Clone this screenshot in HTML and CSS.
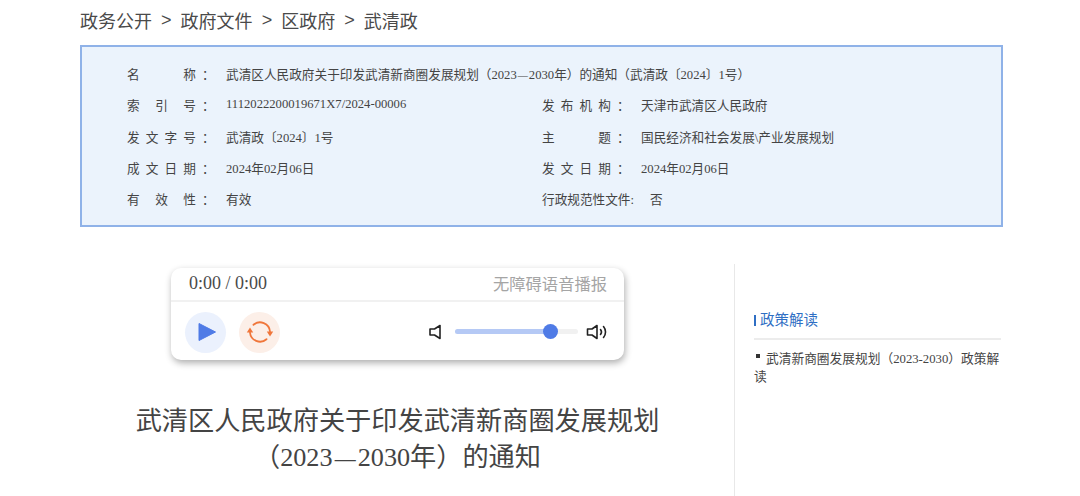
FILE: index.html
```html
<!DOCTYPE html>
<html lang="zh-CN">
<head>
<meta charset="utf-8">
<title>武清区人民政府关于印发武清新商圈发展规划</title>
<link rel="stylesheet" href="styles.css">
</head>
<body>
<div class="page">
  <nav class="crumbs"><span>政务公开</span><i>&gt;</i><span>政府文件</span><i>&gt;</i><span>区政府</span><i>&gt;</i><span>武清政</span></nav>
  <section class="info">
    <div class="row"><div class="cell wide"><span class="label">名称</span><span class="colon">：</span><span class="value">武清区人民政府关于印发武清新商圈发展规划（2023<span class="dash">—</span>2030年）的通知（武清政〔2024〕1号）</span></div></div>
    <div class="row">
      <div class="cell"><span class="label">索引号</span><span class="colon">：</span><span class="value">1112022200019671X7/2024-00006</span></div>
      <div class="cell"><span class="label">发布机构</span><span class="colon">：</span><span class="value">天津市武清区人民政府</span></div>
    </div>
    <div class="row">
      <div class="cell"><span class="label">发文字号</span><span class="colon">：</span><span class="value">武清政〔2024〕1号</span></div>
      <div class="cell"><span class="label">主题</span><span class="colon">：</span><span class="value">国民经济和社会发展\产业发展规划</span></div>
    </div>
    <div class="row">
      <div class="cell"><span class="label">成文日期</span><span class="colon">：</span><span class="value">2024年02月06日</span></div>
      <div class="cell"><span class="label">发文日期</span><span class="colon">：</span><span class="value">2024年02月06日</span></div>
    </div>
    <div class="row">
      <div class="cell"><span class="label">有效性</span><span class="colon">：</span><span class="value">有效</span></div>
      <div class="cell"><span class="label free">行政规范性文件:</span><span class="value">否</span></div>
    </div>
  </section>
  <div class="content">
    <main class="article">
      <div class="player">
        <div class="player-top"><span class="time">0:00 / 0:00</span><span class="hint">无障碍语音播报</span></div>
        <div class="player-bottom">
          <span class="round play"><svg width="18" height="20" viewBox="0 0 18 20"><path d="M1 1.500v17L17.500 10z" fill="#4f7be6" stroke="#4f7be6" stroke-linejoin="round"/></svg></span>
          <span class="round loop"><svg width="28" height="26" viewBox="0 0 28 26" fill="none" stroke="#f0763a" stroke-width="1.800" stroke-linecap="round"><path d="M7.500 5.800A10 10 0 0 1 24 12.500"/><path d="M20.500 20.200A10 10 0 0 1 4 13.500"/><path d="M20.800 12.500h6.400L24 17.500z" fill="#f0763a" stroke="none"/><path d="M0.800 13.500h6.400L4 8.500z" fill="#f0763a" stroke="none"/></svg></span>
          <div class="volume">
            <svg width="14" height="16" viewBox="0 0 14 16" fill="none" stroke="#222" stroke-width="1.600" stroke-linejoin="round"><path d="M12 1.500v13L6.500 11H2V5h4.500z"/></svg>
            <div class="track"><div class="fill"></div><div class="knob"></div></div>
            <svg width="22" height="16" viewBox="0 0 22 16" fill="none" stroke="#222" stroke-width="1.600" stroke-linejoin="round" stroke-linecap="round"><path d="M11 1.500v13L6 11H1.500V5H6z"/><path d="M14.500 5.500a4 4 0 0 1 0 5"/><path d="M17.500 2.500a8.500 8.500 0 0 1 0 11"/></svg>
          </div>
        </div>
      </div>
      <h1 class="title">武清区人民政府关于印发武清新商圈发展规划<br>（2023<span class="dash">—</span>2030年）的通知</h1>
    </main>
    <aside class="side">
      <h2 class="side-title">政策解读</h2>
      <p class="side-link"><span class="bullet"></span>武清新商圈发展规划（2023-2030）政策解读</p>
    </aside>
  </div>
</div>
</body>
</html>
```
FILE: styles.css
```css
* { box-sizing: border-box; }
html, body { margin: 0; padding: 0; background: #fff; }
body {
  width: 1080px;
  height: 496px;
  overflow: hidden;
  font-family: "Liberation Serif", "Noto Sans CJK SC", serif;
  color: #444;
}
.page { margin-left: 80px; width: 923px; }
.crumbs {
  height: 45px;
  display: flex;
  align-items: center;
  padding-bottom: 5px;
  font-size: 18px;
  color: #4a4a4a;
}
.crumbs i {
  font-family: "Liberation Sans", sans-serif;
  font-style: normal;
  font-size: 18px;
  width: 28.600px;
  text-align: center;
}
.dash { display: inline-block; font-size: .8em; margin: 0 .1em; }
.info {
  height: 182px;
  border: 2px solid #8fb2e8;
  background: #ebf3fc;
  padding: 11px 0 0 45px;
  font-size: 12.650px;
  color: #444;
}
.row { display: flex; height: 31.250px; align-items: center; }
.cell { width: 415px; display: flex; align-items: center; flex: none; }
.cell.wide { width: auto; }
.label {
  width: 69px;
  text-align: justify;
  text-align-last: justify;
  text-justify: inter-character;
  flex: none;
}
.label.free {
  width: auto;
  text-align-last: auto;
  margin-right: 16px;
}
.colon { width: 30px; flex: none; padding-left: 6px; }
.value { white-space: nowrap; }
.content { display: flex; height: 232px; margin-top: 37px; }
.article { width: 635px; margin-right: 19px; flex: none; padding-top: 4px; }
.player {
  width: 453px;
  height: 92px;
  margin: 0 auto;
  border-radius: 10px;
  background: #fff;
  box-shadow: 1px 3px 7px rgba(0, 0, 0, .32);
}
.player-top {
  height: 34px;
  padding: 0 17px 2px 18px;
  border-bottom: 2px solid #f1f1f1;
  display: flex;
  align-items: center;
  justify-content: space-between;
}
.time { font-size: 18px; color: #4a4a4a; }
.hint { font-size: 16.300px; color: #a5a5a5; margin-top: -1px; }
.player-bottom {
  height: 58px;
  padding: 2px 16px 0 14px;
  display: flex;
  align-items: center;
  gap: 13px;
}
.round {
  width: 41px;
  height: 41px;
  border-radius: 50%;
  display: flex;
  align-items: center;
  justify-content: center;
}
.play { background: #ebf1fd; padding-left: 2px; }
.loop { background: #fcefe8; }
.volume { margin-left: auto; display: flex; align-items: center; gap: 13px; margin-top: -1px; }
.volume svg:last-child { margin-left: -5px; }
.track {
  position: relative;
  width: 123px;
  height: 5px;
  border-radius: 3px;
  background: #f1f1f1;
}
.fill { width: 95px; height: 100%; border-radius: 3px; background: #b5c9f5; }
.knob {
  position: absolute;
  left: 88px;
  top: -5px;
  width: 15px;
  height: 15px;
  border-radius: 50%;
  background: #4f7be6;
}
.title {
  margin: 44px 0 0;
  text-align: center;
  font-size: 26.200px;
  line-height: 36px;
  font-weight: 400;
  color: #444;
}
.side { flex: 1; border-left: 1px solid #e8e8e8; padding: 47px 2px 0 19px; }
.side-title {
  margin: 0;
  height: 29px;
  font-size: 14.500px;
  font-weight: 400;
  line-height: 20px;
  color: #2f6fc4;
  border-bottom: 2px solid #ececec;
  display: flex;
  align-items: center;
  padding-bottom: 9px;
}
.side-title::before {
  content: "";
  width: 2px;
  height: 11px;
  background: #2f6fc4;
  margin-right: 4px;
}
.side-link {
  margin: 10px 0 0;
  font-size: 12.720px;
  line-height: 18px;
  color: #444;
}
.bullet {
  display: inline-block;
  width: 4px;
  height: 4px;
  margin: 0 6px 0 2px;
  background: #333;
  vertical-align: 5px;
}
```
